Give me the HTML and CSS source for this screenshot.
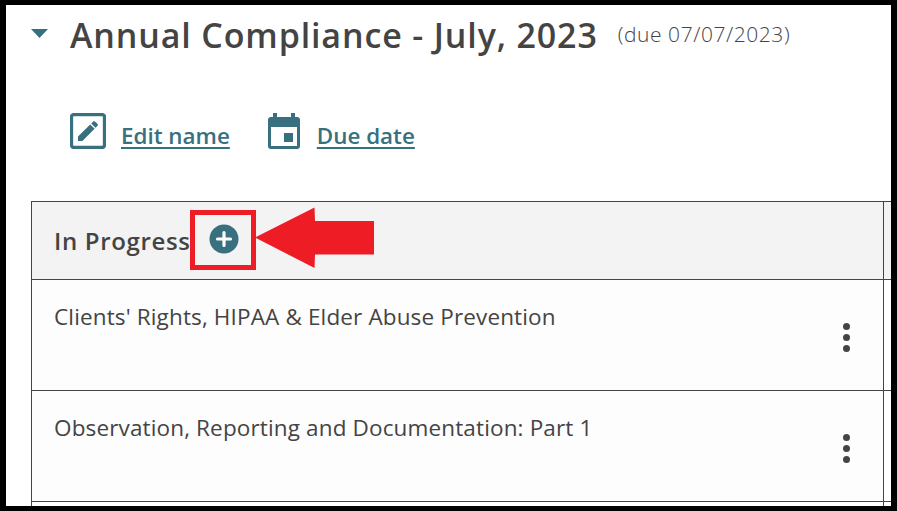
FILE: index.html
```html
<!DOCTYPE html>
<html lang="en">
<head>
<meta charset="utf-8">
<title>Annual Compliance</title>
<link rel="stylesheet" href="styles.css">
</head>
<body>
<main class="frame">
  <header class="title-row">
    <svg class="caret" viewBox="0 0 17 9"><path d="M0 0H17L8.5 9Z"/></svg>
    <h1 class="title">Annual Compliance - July, 2023</h1>
    <span class="due">(due 07/07/2023)</span>
  </header>
  <nav class="actions">
    <a class="action action-edit" href="#">
      <svg class="icon-edit" viewBox="0 0 36 36"><rect x="1.500" y="1.500" width="33" height="33" rx="2.500" fill="none" stroke="#38707f" stroke-width="3.300"/><path fill="#38707f" d="M8 23.600V28h4.400L24.600 15.800l-4.400-4.400ZM27.600 12.800a1.200 1.200 0 0 0 0-1.700l-2.700-2.700a1.200 1.200 0 0 0-1.700 0l-2 2 4.400 4.400Z"/></svg>
      <span>Edit name</span>
    </a>
    <a class="action" href="#">
      <svg class="icon-cal" viewBox="0 0 32 36"><path fill="#38707f" d="M5 0h4v4h14V0h4v4h2a3 3 0 0 1 3 3v26a3 3 0 0 1-3 3H3a3 3 0 0 1-3-3V7a3 3 0 0 1 3-3h2ZM3 14v19h26V14Z"/><rect fill="#38707f" x="16" y="20" width="9" height="9"/></svg>
      <span>Due date</span>
    </a>
  </nav>
  <section class="board">
    <div class="column">
      <div class="column-head">
        <h2 class="column-title">In Progress</h2>
        <svg class="add" viewBox="0 0 30 30"><circle cx="15" cy="15" r="14.500" fill="#38707f"/><path d="M15 8.500v13M8.500 15h13" stroke="#fff" stroke-width="3.200" stroke-linecap="round"/></svg>
      </div>
      <article class="card">
        <p class="card-text">Clients' Rights, HIPAA &amp; Elder Abuse Prevention</p>
        <div class="dots"><i></i><i></i><i></i></div>
      </article>
      <article class="card">
        <p class="card-text">Observation, Reporting and Documentation: Part 1</p>
        <div class="dots"><i></i><i></i><i></i></div>
      </article>
    </div>
    <div class="next-column">
      <div class="next-head"></div>
      <div class="next-row"></div>
      <div class="next-row"></div>
    </div>
  </section>
  <div class="callout-box"></div>
  <svg class="callout-arrow" viewBox="0 0 120 62"><path fill="#ee1c25" d="M0 30.500L59.500 0.500L60 14H119V47.500H60L59.500 61Z"/></svg>
</main>
</body>
</html>
```
FILE: styles.css
```css
html, body {
  margin: 0;
  padding: 0;
  background: #000;
}
.frame {
  position: relative;
  box-sizing: border-box;
  width: 885px;
  height: 501px;
  margin: 5px 0 0 6px;
  background: #fff;
  overflow: hidden;
  font-family: "Open Sans", "Noto Sans", sans-serif;
  color: #444;
}
.title-row {
  display: flex;
  align-items: center;
  height: 60px;
  padding-left: 25px;
}
.caret {
  width: 17px;
  height: 9px;
  margin-top: -4px;
  fill: #38707f;
}
.title {
  margin: 0 0 0 22px;
  font-size: 34px;
  line-height: 60px;
  font-weight: 600;
  letter-spacing: 0.86px;
  color: #444;
  white-space: nowrap;
}
.due {
  margin: -3px 0 0 20px;
  font-size: 21px;
  font-weight: 300;
  letter-spacing: 0.56px;
  color: #444;
  white-space: nowrap;
}
.actions {
  display: flex;
  align-items: flex-start;
  height: 136px;
  padding: 48px 0 0 64px;
  box-sizing: border-box;
  gap: 38px;
}
.action {
  display: flex;
  align-items: flex-start;
  gap: 15px;
  color: #38707f;
  font-size: 22.4px;
  font-weight: 600;
  text-decoration: underline;
  text-underline-offset: 3px;
}
.action span {
  margin-top: 7px;
}
.icon-edit {
  width: 36px;
  height: 36px;
}
.icon-cal {
  width: 32px;
  height: 36px;
  margin-right: 2px;
}
.board {
  display: flex;
  height: 305px;
  margin-left: 25px;
  border-top: 1px solid #444;
  border-left: 1px solid #444;
}
.column {
  width: 851px;
  flex: none;
  border-right: 1px solid #444;
}
.column-head {
  display: flex;
  align-items: center;
  box-sizing: border-box;
  height: 78px;
  padding-left: 22px;
  background: #f3f3f3;
  border-bottom: 1px solid #444;
}
.column-title {
  margin: 0;
  font-size: 24px;
  font-weight: 600;
  letter-spacing: 0.65px;
  color: #444;
  white-space: nowrap;
}
.add {
  width: 30px;
  height: 30px;
  margin: -3px 0 0 18px;
}
.card {
  position: relative;
  box-sizing: border-box;
  height: 111px;
  padding: 21px 22px 0;
  background: #fdfdfd;
  border-bottom: 1px solid #444;
}
.card-text {
  margin: 0;
  font-size: 22.5px;
  line-height: 32px;
  letter-spacing: 0.14px;
  color: #444;
}
.dots {
  position: absolute;
  top: 43px;
  left: 811px;
  display: flex;
  flex-direction: column;
  gap: 4px;
}
.dots i {
  display: block;
  width: 7px;
  height: 7px;
  border-radius: 50%;
  background: #444;
}
.next-column {
  flex: 1;
}
.next-head {
  box-sizing: border-box;
  height: 78px;
  background: #f3f3f3;
  border-bottom: 1px solid #444;
}
.next-row {
  box-sizing: border-box;
  height: 111px;
  border-bottom: 1px solid #444;
}
.callout-box {
  position: absolute;
  left: 184px;
  top: 205px;
  width: 66px;
  height: 60px;
  box-sizing: border-box;
  border: 5px solid #ee1c25;
}
.callout-arrow {
  position: absolute;
  left: 249px;
  top: 202px;
  width: 120px;
  height: 62px;
}
```
